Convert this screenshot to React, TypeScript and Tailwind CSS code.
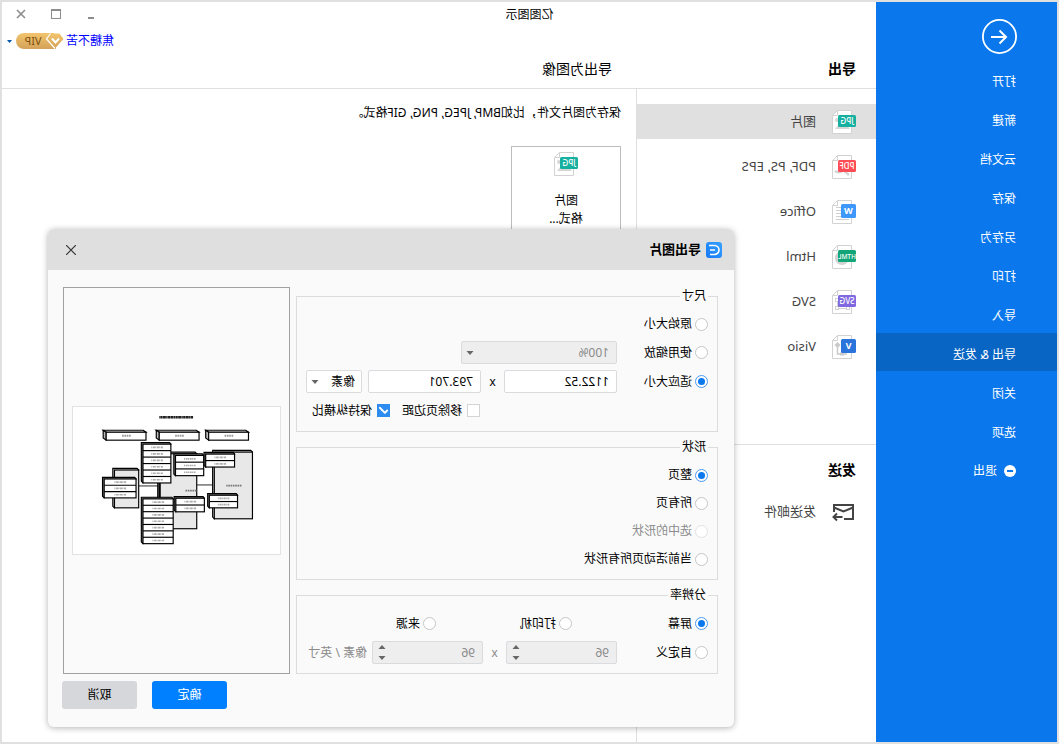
import type { ReactNode } from "react";
import { Check } from "lucide-react";

const menu = ["打开", "新建", "云文档", "保存", "另存为", "打印", "导入", "导出 & 发送", "关闭", "选项"];

type Kind = "jpg" | "pdf" | "word" | "html" | "svg" | "visio";

const formats: { kind: Kind; label: string }[] = [
  { kind: "jpg", label: "图片" },
  { kind: "pdf", label: "PDF, PS, EPS" },
  { kind: "word", label: "Office" },
  { kind: "html", label: "Html" },
  { kind: "svg", label: "SVG" },
  { kind: "visio", label: "Visio" },
];

const badges: Record<Kind, { text: string; color: string }> = {
  jpg: { text: "JPG", color: "#15b0a0" },
  pdf: { text: "PDF", color: "#ff4d55" },
  word: { text: "W", color: "#3e97fb" },
  html: { text: "HTML", color: "#12a577" },
  svg: { text: "SVG", color: "#8069e0" },
  visio: { text: "V", color: "#2a74dc" },
};

function FileIcon({ kind }: { kind: Kind }) {
  const { text, color } = badges[kind];
  const square = text.length === 1;
  return (
    <svg width="24" height="24" viewBox="0 0 24 24" className="shrink-0" aria-hidden>
      <path d="M4.5 0.5H18.5L23.5 5.5V23.5H4.5Z" fill="#fff" stroke="#d2d2d2" />
      <path d="M18.5 0.5V5.5H23.5" fill="none" stroke="#d2d2d2" />
      {kind === "jpg" && (
        <g fill="#d6d6d6">
          <path d="M6 19L12 12L15 16L17 14L21 19Z" />
          <circle cx="19" cy="10" r="2" />
        </g>
      )}
      {kind === "pdf" && <path d="M7 20C10 18 11 17 12 15M13 15C15 17 18 18 21 16" stroke="#d2d2d2" strokeWidth="2.5" fill="none" />}
      {kind === "word" && <path d="M14 7.5H20M14 10.5H20M14 13.5H20M7 16.5H20M7 19.5H20" stroke="#cfcfcf" />}
      {kind === "html" && <circle cx="14" cy="13" r="7" fill="#d2d2d2" />}
      {kind === "svg" && (
        <g fill="none" stroke="#d2d2d2">
          <path d="M8 18.5H19M18.5 10V17" />
          <rect x="6.5" y="16.5" width="3" height="3" fill="#fff" />
          <rect x="17.5" y="16.5" width="3" height="3" fill="#fff" />
          <rect x="17.5" y="8.5" width="3" height="3" fill="#fff" />
        </g>
      )}
      {kind === "visio" && (
        <g fill="none" stroke="#cacaca" strokeWidth="1.5">
          <path d="M18.5 10V19H9" />
          <path d="M18.5 7L21.5 10L18.5 13L15.5 10Z" fill="#cacaca" stroke="none" />
          <rect x="12" y="17.5" width="4" height="3" fill="#cacaca" stroke="none" />
        </g>
      )}
      {square ? (
        <rect x="0" y="4" width="15" height="14" rx="1.5" fill={color} />
      ) : (
        <rect x="0" y="5" width="18" height="12" rx="1.5" fill={color} />
      )}
      <text
        x={square ? 7.5 : 9}
        y={square ? 14.3 : 13.9}
        textAnchor="middle"
        fontSize={square ? 9 : kind === "html" ? 6.5 : 8}
        fontWeight={square ? 700 : 500}
        fontFamily="Noto Sans, sans-serif"
        fill="#fff"
      >
        {text}
      </text>
    </svg>
  );
}

function VipBadge() {
  return (
    <svg width="48" height="16" viewBox="0 0 48 16">
      <defs>
        <linearGradient id="gold" x1="0" y1="0" x2="0" y2="1">
          <stop offset="0%" stopColor="#f3c46c" />
          <stop offset="100%" stopColor="#d3a25a" />
        </linearGradient>
      </defs>
      <path d="M10 0H40A8 8 0 0 1 40 16H8Z" fill="url(#gold)" />
      <path d="M4.5 0.5H13.5L17.5 6L9 15.5L0.5 6Z" fill="url(#gold)" />
      <path d="M13.5 0.5L17.5 6L9 15.5" fill="none" stroke="#fff" strokeWidth="1.2" />
      <path d="M5 5.5L8.5 9.5L12 5.5" fill="none" stroke="#fff" strokeWidth="2" />
      <text x="31" y="12" textAnchor="middle" fontSize="11" fontFamily="Noto Sans, sans-serif" fill="#7a5010">
        VIP
      </text>
    </svg>
  );
}

const headers = [95, 244, 404];

// x, y, width, height of the shaded blocks
const blocks = [
  [83, 136, 115, 201],
  [251, 141, 112, 226],
  [426, 190, 73, 114],
];

// x, y, width, height, rows
const tables = [
  [329, 112, 84, 117, 6],
  [322, 277, 91, 135, 7],
  [230, 146, 85, 61, 3],
  [228, 275, 86, 41, 2],
  [137, 142, 87, 39, 2],
  [128, 266, 85, 38, 2],
  [434, 217, 96, 57, 3],
];

function Diagram() {
  return (
    <svg viewBox="0 0 624 441" className="w-full border border-[#e2e2e2] bg-white" role="img" aria-label="预览">
      <path d="M262 31H364" stroke="#222" strokeWidth="7" strokeDasharray="7 1 4 1 9 1" />
      {headers.map((x) => (
        <g key={x} stroke="#000" strokeWidth="3.5">
          <path d={`M${x} 76L${x + 8} 70H${x + 129}L${x + 120} 76Z`} fill="#fff" />
          <path d={`M${x + 120} 76L${x + 129} 70V93L${x + 120} 100Z`} fill="#bbb" />
          <rect x={x} y="76" width="120" height="24" fill="#fff" />
          <path d={`M${x + 46} 87H${x + 72}`} stroke="#999" strokeWidth="6" strokeDasharray="5 2" />
        </g>
      ))}
      <path d="M363 238H426M198 235H251M202 181V266" stroke="#000" strokeWidth="2.5" />
      {blocks.map(([x, y, w, h]) => (
        <g key={x} stroke="#000" strokeWidth="3.5">
          <path d={`M${x} ${y}L${x + 5} ${y - 5}H${x + w + 5}V${y + h - 5}L${x + w} ${y + h}Z`} fill="#ccc" />
          <rect x={x} y={y} width={w} height={h} fill="#e8e8e8" />
        </g>
      ))}
      <path d="M361 229V277M368 229V277" stroke="#000" strokeWidth="3" />
      {tables.map(([x, y, w, h, rows]) => (
        <g key={`${x}-${y}`} stroke="#000" strokeWidth="3.5">
          <path d={`M${x} ${y}L${x + 4} ${y - 5}H${x + w + 5}V${y + h - 5}L${x + w} ${y + h}Z`} fill="#777" />
          <rect x={x} y={y} width={w} height={h} fill="#fff" />
          {Array.from({ length: rows }).map((_, i) => {
            const top = y + (h / rows) * i;
            return (
              <g key={i}>
                {i > 0 && <path d={`M${x} ${top}H${x + w}`} />}
                <path
                  d={`M${x + w / 2 - 18} ${top + h / rows / 2}H${x + w / 2 + 18}`}
                  stroke="#aaa"
                  strokeWidth="5"
                  strokeDasharray="6 2 3 1"
                />
              </g>
            );
          })}
        </g>
      ))}
      <path d="M116 237H162M252 252H286" stroke="#777" strokeWidth="5" strokeDasharray="5 2" />
    </svg>
  );
}

function Caret({ up = false }: { up?: boolean }) {
  return (
    <svg width="8" height="4" viewBox="0 0 8 4" aria-hidden>
      <path d={up ? "M0.5 4L4 0L7.5 4Z" : "M0.5 0L4 4L7.5 0Z"} fill="#666" />
    </svg>
  );
}

type RadioProps = { name: string; label: string; checked?: boolean; disabled?: boolean };

function Radio({ name, label, checked, disabled }: RadioProps) {
  return (
    <label className={disabled ? "flex items-center gap-[3px] text-[#8a8a8a]" : "flex items-center gap-[3px]"}>
      <input
        type="radio"
        name={name}
        defaultChecked={checked}
        disabled={disabled}
        className="grid size-[13px] shrink-0 appearance-none place-content-center rounded-full border border-[#c6c6c6] bg-white before:size-[7px] before:rounded-full checked:border-[#4a9af3] checked:before:bg-[#0a78ee] disabled:border-[#e2e2e2]"
      />
      {label}
    </label>
  );
}

function Checkbox({ label, checked }: { label: string; checked?: boolean }) {
  return (
    <label className="flex items-center gap-[5px]">
      <span className="relative size-[13px]">
        <input
          type="checkbox"
          defaultChecked={checked}
          className="peer block size-[13px] appearance-none border border-[#d4d4d4] bg-white checked:border-[#2d8cf0] checked:bg-[#2d8cf0]"
        />
        <Check className="absolute left-px top-px hidden size-[11px] text-white peer-checked:block" strokeWidth={4} />
      </span>
      {label}
    </label>
  );
}

function Group({ title, children }: { title: string; children: ReactNode }) {
  return (
    <fieldset className="border border-[#dcdcdc] px-[9px] pb-[6px]">
      <legend className="px-0.5 leading-[18px]">{title}</legend>
      <div className="pt-[5px]">{children}</div>
    </fieldset>
  );
}

function Select({ label, value, disabled, className }: { label: string; value: string; disabled?: boolean; className: string }) {
  return (
    <div className={`relative ${className}`}>
      <select
        aria-label={label}
        disabled={disabled}
        className="block h-[23px] w-full appearance-none rounded-[2px] border border-[#d9dbde] bg-white pl-[6px] text-xs disabled:bg-[#eeeeee] disabled:pl-[7px] disabled:text-[#8a8a8a] disabled:opacity-100"
      >
        <option>{value}</option>
      </select>
      <span className="pointer-events-none absolute inset-y-0 right-[5px] flex items-center">
        <Caret />
      </span>
    </div>
  );
}

function Spinner({ label }: { label: string }) {
  return (
    <div className="flex h-[23px] w-[111px] rounded-[2px] border border-[#d9dbde] bg-[#eeeeee] pl-[7px] pr-[5px]">
      <input aria-label={label} defaultValue="96" disabled className="w-full min-w-0 text-[#8a8a8a]" />
      <div className="flex flex-col justify-between py-[3px]">
        <Caret up />
        <Caret />
      </div>
    </div>
  );
}

function ExportDialog() {
  const field = "h-[23px] w-[113px] rounded-[2px] border border-[#d9dbde] bg-white px-[7px]";
  return (
    <section
      role="dialog"
      aria-labelledby="dialog-title"
      className="absolute left-[323px] right-[46px] top-[227px] rounded-md bg-[#fafafa] shadow-[0_1px_6px_rgba(0,0,0,0.3)]"
    >
      <header className="flex h-[41px] items-center rounded-t-md bg-[#dfdfdf] pl-3 pr-[18px]">
        <svg width="16" height="16" viewBox="0 0 16 16" aria-hidden>
          <defs>
            <linearGradient id="logo" x1="0" y1="0" x2="1" y2="1">
              <stop offset="0%" stopColor="#3aa2ff" />
              <stop offset="100%" stopColor="#1478f5" />
            </linearGradient>
          </defs>
          <rect width="16" height="16" rx="3" fill="url(#logo)" />
          <path d="M13 3.500H7.500A4.500 4.500 0 0 0 7.500 12.500H12M7 8H12" fill="none" stroke="#fff" strokeWidth="1.6" />
        </svg>
        <h2 id="dialog-title" className="ml-[5px] text-[13px] font-bold">
          导出图片
        </h2>
        <button type="button" aria-label="关闭" className="ml-auto">
          <svg width="10" height="10" viewBox="0 0 10 10" fill="none" stroke="#333" strokeWidth="1.2">
            <path d="M0 0L10 10M10 0L0 10" />
          </svg>
        </button>
      </header>

      <form className="pb-[18px] pl-4 pr-[14px] pt-[17px]" onSubmit={(e) => e.preventDefault()}>
        <div className="flex gap-[6px]">
          <div className="flex flex-1 flex-col gap-[6px]">
            <Group title="尺寸">
              <div className="flex h-7 items-center">
                <Radio name="size" label="原始大小" />
              </div>
              <div className="flex h-[29px] items-center">
                <div className="w-[91px]">
                  <Radio name="size" label="使用缩放" />
                </div>
                <Select label="缩放" value="100%" disabled className="w-[156px]" />
              </div>
              <div className="flex h-[29px] items-center">
                <div className="w-[91px]">
                  <Radio name="size" label="适应大小" checked />
                </div>
                <input aria-label="宽度" defaultValue="1122.52" className={field} />
                <span className="w-[23px] text-center">x</span>
                <input aria-label="高度" defaultValue="793.701" className={field} />
                <Select label="单位" value="像素" className="ml-[6px] w-14" />
              </div>
              <div className="flex h-[29px] items-center gap-3 pl-[228px]">
                <Checkbox label="移除页边距" />
                <Checkbox label="保持纵横比" checked />
              </div>
            </Group>

            <Group title="形状">
              <div className="flex h-7 items-center">
                <Radio name="shape" label="整页" checked />
              </div>
              <div className="flex h-7 items-center">
                <Radio name="shape" label="所有页" />
              </div>
              <div className="flex h-7 items-center">
                <Radio name="shape" label="选中的形状" disabled />
              </div>
              <div className="flex h-7 items-center">
                <Radio name="shape" label="当前活动页所有形状" />
              </div>
            </Group>

            <Group title="分辨率">
              <div className="grid h-[29px] grid-cols-[136px_136px_1fr] items-center">
                <Radio name="dpi" label="屏幕" checked />
                <Radio name="dpi" label="打印机" />
                <Radio name="dpi" label="来源" />
              </div>
              <div className="flex h-[29px] items-center">
                <div className="w-[91px]">
                  <Radio name="dpi" label="自定义" />
                </div>
                <Spinner label="水平分辨率" />
                <span className="w-[23px] text-center text-[#8a8a8a]">x</span>
                <Spinner label="垂直分辨率" />
                <span className="ml-[5px] text-[#8a8a8a]">像素 / 英寸</span>
              </div>
            </Group>
          </div>

          <div className="mr-px flex w-[227px] items-center border border-[#a0a0a0] px-2">
            <Diagram />
          </div>
        </div>

        <div className="mt-[7px] flex justify-end gap-[15px]">
          <button type="submit" className="h-7 w-[75px] rounded-[3px] bg-[#007fff] text-white">
            确定
          </button>
          <button type="button" className="h-7 w-[75px] rounded-[3px] bg-[#d5d7db]">
            取消
          </button>
        </div>
      </form>
    </section>
  );
}

function Sidebar() {
  return (
    <nav className="w-[181px] shrink-0 bg-[#0a78ec] pt-[17px] text-white">
      <button type="button" aria-label="返回" className="ml-10 block">
        <svg width="36" height="36" viewBox="0 0 36 36" fill="none" stroke="#fff">
          <circle cx="17.5" cy="17.5" r="16.6" strokeWidth="1.8" />
          <path d="M26 18H11M17.500 11.500L11 18L17.500 24.500" strokeWidth="2" />
        </svg>
      </button>
      <ul className="mt-[5px] flex flex-col gap-px">
        {menu.map((item) => (
          <li key={item}>
            <a
              href="#"
              className={
                item === "导出 & 发送"
                  ? "flex h-[38px] items-center bg-[#0865c4] pl-[41px] pt-[6px]"
                  : "flex h-[38px] items-center pl-[41px] pt-[6px]"
              }
            >
              {item}
            </a>
          </li>
        ))}
        <li>
          <a href="#" className="flex h-[38px] items-center gap-[7px] pl-[41px] pt-1">
            <svg width="12" height="12" viewBox="0 0 12 12" aria-hidden>
              <circle cx="6" cy="6" r="6" fill="#fff" />
              <path d="M3 6H9" stroke="#0a78ec" strokeWidth="2" />
            </svg>
            退出
          </a>
        </li>
      </ul>
    </nav>
  );
}

function Header() {
  return (
    <header className="flex h-[87px] justify-between border-b border-[#dfdfdf]">
      <div className="flex items-end pb-[9px] text-sm">
        <h2 className="w-[264px] pl-5 font-bold">导出</h2>
        <h1>导出为图像</h1>
      </div>
      <div className="flex flex-col items-end">
        <div className="flex h-[23px] items-center gap-[25px] pr-[14px] text-[#8c8c8c]">
          <button type="button" aria-label="最小化" className="flex size-[10px] items-end justify-center">
            <span className="h-0.5 w-[6px] bg-[#8c8c8c]" />
          </button>
          <button type="button" aria-label="最大化" className="size-[10px] border border-t-2 border-[#8c8c8c]" />
          <button type="button" aria-label="关闭窗口">
            <svg width="10" height="10" viewBox="0 0 10 10" stroke="currentColor" strokeWidth="1.6">
              <path d="M1 1L9 9M9 1L1 9" />
            </svg>
          </button>
        </div>
        <div className="flex h-8 items-center gap-[2px] pr-[5px]">
          <a href="#" className="text-[#0000ff]">
            焦糖不苦
          </a>
          <VipBadge />
          <svg width="5" height="3" viewBox="0 0 5 3" className="ml-0.5" aria-hidden>
            <path d="M0 0H5L2.500 3Z" fill="#0055b0" />
          </svg>
        </div>
      </div>
    </header>
  );
}

export default function App() {
  return (
    <div className="relative flex min-h-screen -scale-x-100 border-2 border-[#e0e0e0] bg-white font-['Noto_Sans','Noto_Sans_CJK_SC',sans-serif] text-xs text-black">
      <Sidebar />
      <div className="flex min-w-0 flex-1 flex-col">
        <Header />
        <div className="flex flex-1">
          <aside className="w-60 shrink-0 border-r border-[#dfdfdf] text-[13px] text-[#444]">
            <ul className="flex flex-col gap-[10px] pt-[15px]">
              {formats.map(({ kind, label }) => (
                <li key={kind}>
                  <a
                    href="#"
                    className={
                      kind === "jpg"
                        ? "flex h-[35px] items-center gap-4 bg-[#e0e0e0] pl-5"
                        : "flex h-[35px] items-center gap-4 pl-5"
                    }
                  >
                    <FileIcon kind={kind} />
                    {label}
                  </a>
                </li>
              ))}
            </ul>
            <div className="mt-20 border-t border-[#dfdfdf] pl-5 pt-[15px]">
              <h2 className="text-sm font-bold text-black">发送</h2>
              <a href="#" className="mt-[14px] flex h-[35px] items-center gap-4">
                <svg width="24" height="18" viewBox="0 0 24 18" fill="none" stroke="#444" strokeWidth="2" aria-hidden>
                  <path d="M12 16H3V2H22V9" />
                  <path d="M3 4.500L12.500 8.500L22 4.500" />
                  <path d="M13.500 14H22M19 10.500L22.500 14L19 17.500" />
                </svg>
                发送邮件
              </a>
            </div>
          </aside>
          <main className="flex-1 px-[15px] pt-[14px]">
            <p className="leading-5">保存为图片文件，比如BMP, JPEG, PNG, GIF格式。</p>
            <button type="button" className="mt-[23px] flex w-[110px] flex-col items-center border border-[#bdbdbd] pb-3 pt-[5px]">
              <FileIcon kind="jpg" />
              <span className="mt-4 w-10 leading-[18px]">
                图片
                <br />
                格式...
              </span>
            </button>
          </main>
        </div>
      </div>
      <p className="pointer-events-none absolute inset-x-0 top-1 text-center leading-[18px]">亿图图示</p>
      <ExportDialog />
    </div>
  );
}
